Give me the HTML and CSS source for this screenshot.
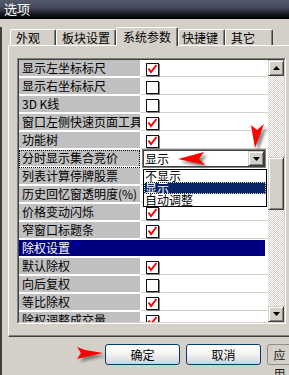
FILE: index.html
```html
<!DOCTYPE html>
<html>
<head>
<meta charset="utf-8">
<link rel="stylesheet" href="styles.css">
</head>
<body>
<div class="titlebar">选项</div>
<div class="main">
  <div class="tabs">
    <div class="tab w46">外观</div>
    <div class="tab w61">板块设置</div>
    <div class="tab w62 active">系统参数</div>
    <div class="tab w47">快捷键</div>
    <div class="tab w48">其它</div>
  </div>
  <div class="panel">
    <div class="list">
      <div class="list-in">
        <div class="grid">
          <div class="row"><div class="label">显示左坐标标尺</div><div class="val"><span class="cb on"><svg viewBox="0 0 11 11"><polyline points="1.5,4.5 4,8 9.5,1"/></svg></span></div></div>
          <div class="row"><div class="label">显示右坐标标尺</div><div class="val"><span class="cb"></span></div></div>
          <div class="row"><div class="label">3D K线</div><div class="val"><span class="cb"></span></div></div>
          <div class="row"><div class="label">窗口左侧快速页面工具</div><div class="val"><span class="cb on"><svg viewBox="0 0 11 11"><polyline points="1.5,4.5 4,8 9.5,1"/></svg></span></div></div>
          <div class="row"><div class="label">功能树</div><div class="val"><span class="cb on"><svg viewBox="0 0 11 11"><polyline points="1.5,4.5 4,8 9.5,1"/></svg></span></div></div>
          <div class="row"><div class="label focus">分时显示集合竞价</div><div class="val combo-cell"><div class="combo"><span class="combo-text">显示</span><span class="combo-btn"><svg width="7" height="4" viewBox="0 0 7 4"><polygon points="0,0 7,0 3.5,4"/></svg></span></div></div></div>
          <div class="row"><div class="label">列表计算停牌股票</div><div class="val"></div></div>
          <div class="row"><div class="label">历史回忆窗透明度(%)</div><div class="val"></div></div>
          <div class="row"><div class="label">价格变动闪烁</div><div class="val"><span class="cb on"><svg viewBox="0 0 11 11"><polyline points="1.5,4.5 4,8 9.5,1"/></svg></span></div></div>
          <div class="row"><div class="label">窄窗口标题条</div><div class="val"><span class="cb on"><svg viewBox="0 0 11 11"><polyline points="1.5,4.5 4,8 9.5,1"/></svg></span></div></div>
          <div class="row head"><div class="head-cell">除权设置</div></div>
          <div class="row"><div class="label">默认除权</div><div class="val"><span class="cb on"><svg viewBox="0 0 11 11"><polyline points="1.5,4.5 4,8 9.5,1"/></svg></span></div></div>
          <div class="row"><div class="label">向后复权</div><div class="val"><span class="cb"></span></div></div>
          <div class="row"><div class="label">等比除权</div><div class="val"><span class="cb on"><svg viewBox="0 0 11 11"><polyline points="1.5,4.5 4,8 9.5,1"/></svg></span></div></div>
          <div class="row"><div class="label">除权调整成交量</div><div class="val"><span class="cb on"><svg viewBox="0 0 11 11"><polyline points="1.5,4.5 4,8 9.5,1"/></svg></span></div></div>
          <div class="dropdown">
            <div class="opt">不显示</div>
            <div class="opt sel">显示</div>
            <div class="opt">自动调整</div>
          </div>
        </div>
        <div class="scrollbar">
          <div class="sb-btn"><svg width="7" height="4" viewBox="0 0 7 4"><polygon points="3.5,0 7,4 0,4"/></svg></div>
          <div class="track"><div class="thumb"></div></div>
          <div class="sb-btn"><svg width="7" height="4" viewBox="0 0 7 4"><polygon points="0,0 7,0 3.5,4"/></svg></div>
        </div>
      </div>
    </div>
  </div>
  <div class="buttons">
    <div class="btn">确定</div>
    <div class="btn">取消</div>
    <div class="btn dis">应用</div>
  </div>
</div>
<svg class="arrows" width="289" height="375" viewBox="0 0 289 375">
  <defs>
    <filter id="sh" x="-50%" y="-50%" width="200%" height="200%"><feGaussianBlur stdDeviation="1.6"/></filter>
  </defs>
  <g fill="#555" opacity="0.7" filter="url(#sh)" transform="translate(3,3)">
    <polygon points="178,159 204,152 199,159 205,165"/>
    <polygon points="251,125 257,130 264,124 255,148"/>
    <polygon points="77,347 85,350 103,353 85,357 77,359 81,353"/>
  </g>
  <g fill="#ff0000">
    <polygon points="178,159 204,152 199,159 205,165"/>
    <polygon points="251,125 257,130 264,124 255,148"/>
    <polygon points="77,347 85,350 103,353 85,357 77,359 81,353"/>
  </g>
</svg>
</body>
</html>
```
FILE: styles.css
```css
* { box-sizing: border-box; margin: 0; padding: 0; }
html, body { width: 289px; height: 375px; overflow: hidden; }
body {
  background: #d4d0c8;
  font-family: "Noto Sans CJK SC", "Noto Sans", sans-serif;
  font-size: 12px;
  color: #000;
  position: relative;
}
.titlebar {
  height: 19px;
  background: linear-gradient(#535a6c, #454b5c 40%, #15171d 75%, #000);
  color: #fff;
  font-size: 13px;
  line-height: 17px;
  padding-left: 4px;
}
.main {
  height: 356px;
  border-left: 2px solid #404040;
}
.tabs {
  display: flex;
  align-items: flex-end;
  height: 18px;
  margin-top: 8px;
  padding-left: 8px;
}
.tab {
  height: 16px;
  border: 1px solid #fff;
  border-bottom: none;
  border-right-color: #404040;
  box-shadow: inset -1px 0 #808080;
  border-radius: 2px 2px 0 0;
  padding-left: 5px;
  line-height: 15px;
  white-space: nowrap;
}
.w46 { width: 46px; }
.w61 { width: 60px; }
.w62 { width: 62px; }
.w47 { width: 47px; padding-left: 3px; }
.w48 { width: 48px; }
.tab.active {
  height: 19px;
  margin-bottom: -1px;
  position: relative;
  z-index: 1;
  background: #d4d0c8;
  padding-left: 6px;
  line-height: 17px;
}
.panel {
  margin-left: 6px;
  width: 290px;
  height: 292px;
  border-top: 1px solid #fff;
  border-left: 1px solid #fff;
  border-bottom: 1px solid #404040;
  box-shadow: inset 0 -1px #808080;
  padding: 12px 0 0 8px;
}
.list {
  width: 269px;
  height: 266px;
  border: 1px solid;
  border-color: #808080 #fff #fff #808080;
}
.list-in {
  height: 100%;
  border: 1px solid;
  border-color: #404040 #d4d0c8 #d4d0c8 #404040;
  display: flex;
}
.grid {
  width: 249px;
  height: 100%;
  overflow: hidden;
  background: #fff;
  position: relative;
}
.row {
  display: flex;
  height: 18px;
}
.label {
  width: 121px;
  flex: none;
  background: #c0c0c0;
  border-bottom: 2px solid #fff;
  padding-left: 3px;
  line-height: 16px;
  white-space: nowrap;
  overflow: hidden;
}
.label.focus {
  outline: 1px dotted #000;
  outline-offset: -1px;
}
.val {
  flex: 1;
  margin-left: 1px;
  padding: 3px 0 0 5px;
  background: linear-gradient(to bottom, #fff 16px, #d4d0c8 16px, #d4d0c8 17px, #fff 17px);
}
.cb {
  display: block;
  width: 13px;
  height: 13px;
  border: 1px solid #111;
  background: #fff;
  box-shadow: 1px 1px 0 #808080;
  position: relative;
}
.cb svg {
  display: block;
  width: 11px;
  height: 11px;
}
.cb polyline {
  fill: none;
  stroke: #ff0000;
  stroke-width: 2;
}
.combo-cell {
  padding: 0 0 0 1px;
  background: #fff;
}
.combo {
  width: 124px;
  height: 19px;
  margin-top: -1px;
  border: 1px solid #808080;
  box-shadow: inset 1px 1px #404040, inset -1px -1px #404040;
  display: flex;
  align-items: center;
  padding: 1px;
  background: #fff;
}
.combo-text {
  flex: 1;
  padding-left: 1px;
  line-height: 15px;
}
.combo-btn {
  width: 16px;
  height: 15px;
  background: #d4d0c8;
  border: 1px solid;
  border-color: #d4d0c8 #404040 #404040 #d4d0c8;
  box-shadow: inset 1px 1px #fff, inset -1px -1px #808080;
  display: flex;
  align-items: center;
  justify-content: center;
}
.head {
  background: #fff;
}
.head-cell {
  flex: 1;
  margin-right: 3px;
  height: 16px;
  background: #000080;
  color: #fff;
  padding-left: 3px;
  line-height: 16px;
}
.dropdown {
  position: absolute;
  left: 124px;
  top: 109px;
  width: 124px;
  height: 38px;
  border: 1px solid #000;
  background: #fff;
  z-index: 2;
}
.opt {
  height: 12px;
  line-height: 12px;
  padding-left: 1px;
  white-space: nowrap;
}
.opt.sel {
  background: #0a246a;
  color: #fff;
  outline: 1px dotted #e8e8a0;
  outline-offset: -1px;
}
.scrollbar {
  width: 16px;
  display: flex;
  flex-direction: column;
}
.sb-btn {
  height: 16px;
  flex: none;
  background: #d4d0c8;
  border: 1px solid;
  border-color: #d4d0c8 #404040 #404040 #d4d0c8;
  box-shadow: inset 1px 1px #fff, inset -1px -1px #808080;
  display: flex;
  align-items: center;
  justify-content: center;
}
.track {
  flex: 1;
  background: conic-gradient(#d4d0c8 25%, #fff 0 50%, #d4d0c8 0 75%, #fff 0);
  background-size: 2px 2px;
}
.thumb {
  margin-top: 81px;
  height: 53px;
  background: #d4d0c8;
  border: 1px solid;
  border-color: #d4d0c8 #404040 #404040 #d4d0c8;
  box-shadow: inset 1px 1px #fff, inset -1px -1px #808080;
}
.buttons {
  display: flex;
  gap: 6px;
  margin-top: 7px;
  padding-left: 103px;
}
.btn {
  flex: none;
  width: 75px;
  height: 21px;
  border: 1px solid #003c74;
  border-radius: 3px;
  background: linear-gradient(#ffffff, #f4f4f0 45%, #dcdae6 85%, #cfcde0);
  text-align: center;
  line-height: 19px;
}
.btn.dis {
  border-color: #8c8c8c;
  background: #d4d0c8;
  color: #222;
  padding-right: 50px;
}
.arrows {
  position: absolute;
  top: 0;
  left: 0;
  pointer-events: none;
}
```
